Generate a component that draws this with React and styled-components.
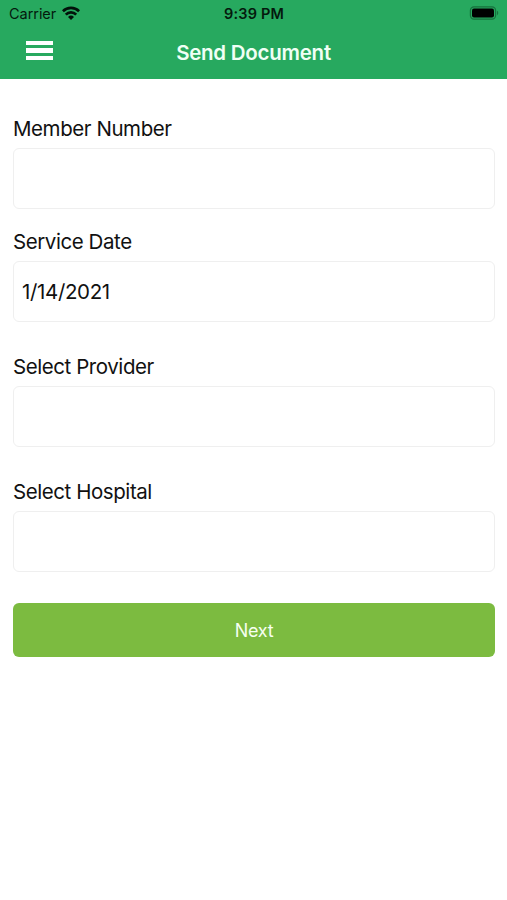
import React from 'react'
import styled, { createGlobalStyle } from 'styled-components'


const GlobalStyle = createGlobalStyle`
  * {
    box-sizing: border-box;
  }

  body {
    margin: 0;
    background: #fff;
    font-family: Inter, 'Liberation Sans', sans-serif;
  }
`

const Screen = styled.div`
  width: 100%;
  height: 900px;
  background: #fff;
  overflow: hidden;
`

const Header = styled.header`
  height: 79px;
  background: #27a95f;
`

const StatusBar = styled.div`
  height: 27px;
  padding: 0 8px 0 9px;
  display: grid;
  grid-template-columns: 1fr auto 1fr;
  align-items: center;
  color: #04190d;
`

const Carrier = styled.div`
  display: flex;
  align-items: center;
  gap: 6px;
  font-size: 14.5px;
  letter-spacing: -0.05px;
  line-height: 27px;
`

const Clock = styled.span`
  font-size: 14.5px;
  font-weight: 600;
  letter-spacing: 0.15px;
  line-height: 27px;
`

const WifiGlyph = styled.svg`
  display: block;
  margin-top: -2px;
`

const BatteryGlyph = styled.svg`
  display: block;
  justify-self: end;
  margin-top: -1px;
`

const NavBar = styled.div`
  height: 52px;
  padding: 0 26px;
  display: grid;
  grid-template-columns: 27px 1fr 27px;
  align-items: center;
`

const MenuButton = styled.button`
  padding: 0;
  border: 0;
  background: none;
  display: flex;
  flex-direction: column;
  gap: 3px;
  margin-top: -5px;
`

const MenuBar = styled.span`
  width: 27px;
  height: 4.4px;
  background: #fff;
`

const Title = styled.h1`
  margin: 0;
  color: #f0fff5;
  font-size: 20.5px;
  font-weight: 600;
  letter-spacing: -0.26px;
  line-height: 26px;
  text-align: center;
  white-space: nowrap;
`

const Form = styled.form`
  padding: 37px 12px 0 13px;
`

const Field = styled.label`
  display: block;
  margin-bottom: ${props => props.$gap || 32}px;
`

const FieldLabel = styled.span`
  display: block;
  margin-bottom: 6px;
  color: #111;
  font-size: 20.5px;
  letter-spacing: -0.43px;
  line-height: 26px;
`

const FieldInput = styled.input`
  display: block;
  width: 100%;
  height: 61px;
  padding: 0 8px 1px;
  border: 1px solid #efefef;
  border-radius: 6px;
  outline: none;
  background: #fff;
  color: #111;
  font-family: inherit;
  font-size: 20.5px;
  letter-spacing: -0.35px;
`

const NextButton = styled.button`
  display: block;
  width: 100%;
  height: 54px;
  margin-top: -1px;
  padding: 0;
  border: 0;
  border-radius: 6px;
  background: #7cbb40;
  color: #f6fff0;
  font-family: inherit;
  font-size: 18px;
  letter-spacing: -0.3px;
`

const WifiIcon = () => (
  <WifiGlyph width="18" height="14" viewBox="0 0 18 14">
    <g fill="none" stroke="#02120a" strokeWidth="2.7">
      <path d="M0.9 5.2a11.5 11.5 0 0 1 16.2 0" />
      <path d="M3.8 8.6a7.2 7.2 0 0 1 10.4 0" />
    </g>
    <path d="M6 10.9a4.4 4.4 0 0 1 6 0L9 13.9z" fill="#02120a" />
  </WifiGlyph>
)

const BatteryIcon = () => (
  <BatteryGlyph width="30" height="14" viewBox="0 0 30 14">
    <rect x="1.4" y="0.8" width="25.2" height="12.4" rx="3.6" fill="none" stroke="#17713d" strokeWidth="1.2" />
    <rect x="3" y="2.6" width="22" height="8.8" rx="2" fill="#000" />
    <path d="M28 4.8c1.6 .6 1.6 3.8 0 4.4z" fill="#17713d" />
  </BatteryGlyph>
)

const App = () => (
  <Screen>
    <GlobalStyle />
    <Header>
      <StatusBar>
        <Carrier>
          <span>Carrier</span>
          <WifiIcon />
        </Carrier>
        <Clock>9:39 PM</Clock>
        <BatteryIcon />
      </StatusBar>
      <NavBar>
        <MenuButton type="button" aria-label="Menu">
          <MenuBar />
          <MenuBar />
          <MenuBar />
        </MenuButton>
        <Title>Send Document</Title>
      </NavBar>
    </Header>
    <Form>
      <Field $gap={20}>
        <FieldLabel>Member Number</FieldLabel>
        <FieldInput />
      </Field>
      <Field>
        <FieldLabel>Service Date</FieldLabel>
        <FieldInput defaultValue="1/14/2021" />
      </Field>
      <Field>
        <FieldLabel>Select Provider</FieldLabel>
        <FieldInput />
      </Field>
      <Field>
        <FieldLabel>Select Hospital</FieldLabel>
        <FieldInput />
      </Field>
      <NextButton type="button">Next</NextButton>
    </Form>
  </Screen>
)

export default App
